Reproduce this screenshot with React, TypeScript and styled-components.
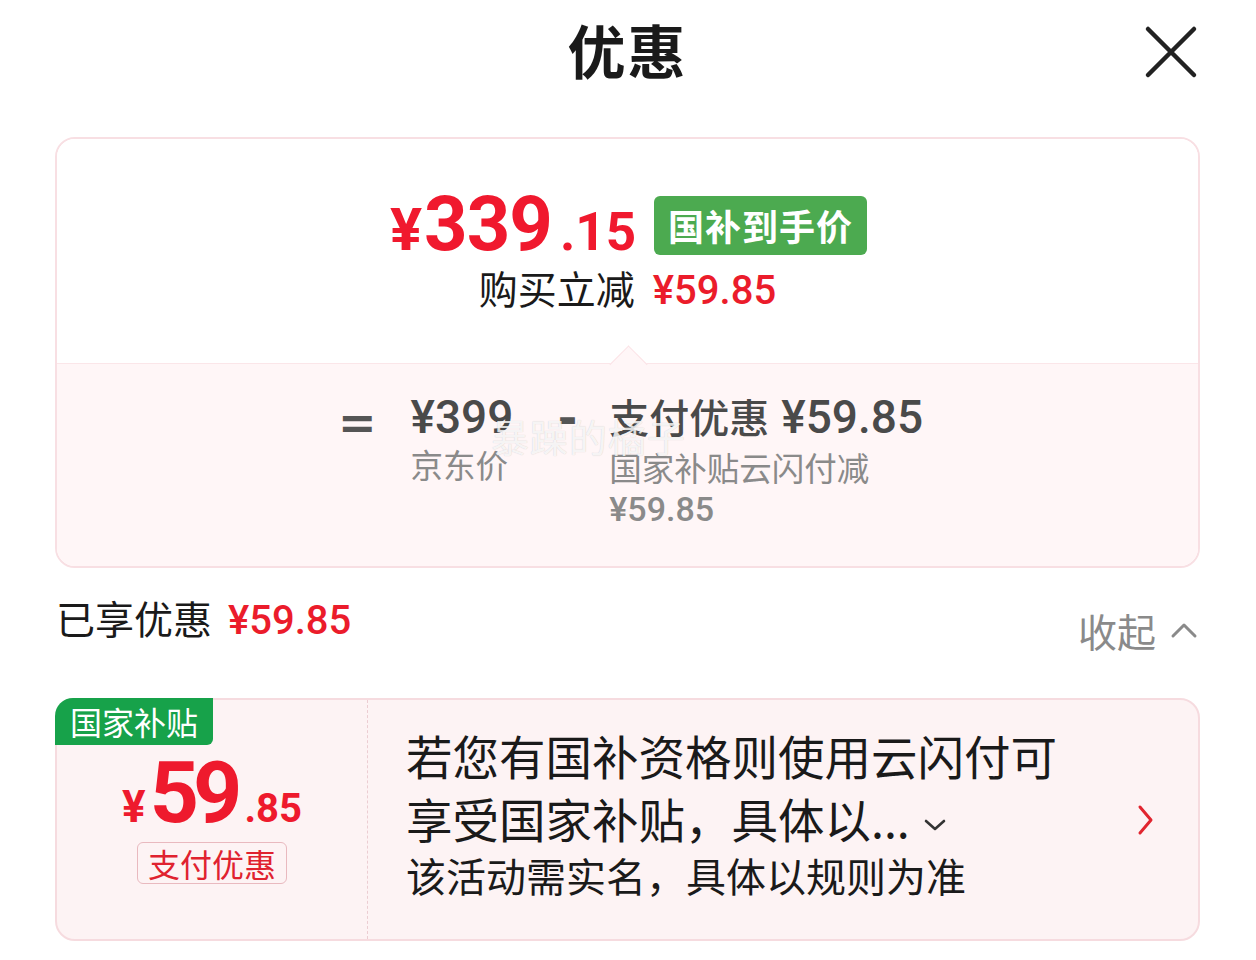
import React from "react";
import styled, { createGlobalStyle } from "styled-components";

const GlobalStyle = createGlobalStyle`
  html, body {
    margin: 0;
    padding: 0;
    background: #fff;
  }
  body {
    font-family: "Noto Sans CJK SC", "Noto Sans", sans-serif;
    color: #1a1a1a;
  }
`;

const NUM = `"Roboto", "Noto Sans CJK SC", sans-serif`;

const App: React.FC = () => {
  return (
    <Page>
      <GlobalStyle />
      <Header>
        <Title>优惠</Title>
        <Close aria-label="close">
          <svg width="54" height="54" viewBox="0 0 54 54">
            <path
              d="M4 4 L50 50 M50 4 L4 50"
              stroke="#222"
              strokeWidth="4.5"
              strokeLinecap="round"
            />
          </svg>
        </Close>
      </Header>

      <Summary>
        <SummaryTop>
          <PriceRow>
            <BigPrice>
              <Yen>¥</Yen>
              <Int>339</Int>
              <Dec>.15</Dec>
            </BigPrice>
            <GreenBadge>国补到手价</GreenBadge>
          </PriceRow>
          <SaveRow>
            购买立减<RedNum>¥59.85</RedNum>
          </SaveRow>
        </SummaryTop>
        <SummaryBottom>
          <Formula>
            <Op>=</Op>
            <Term>
              <TermMain $price>¥399</TermMain>
              <TermSub>京东价</TermSub>
            </Term>
            <Op $minus>-</Op>
            <Term>
              <TermMain>
                支付优惠 <b>¥59.85</b>
              </TermMain>
              <TermSub>国家补贴云闪付减</TermSub>
              <TermSub $num>¥59.85</TermSub>
            </Term>
          </Formula>
          <Watermark>暴躁的橘子</Watermark>
        </SummaryBottom>
      </Summary>

      <EnjoyRow>
        <EnjoyLabel>
          已享优惠<RedNum>¥59.85</RedNum>
        </EnjoyLabel>
        <Collapse>
          收起
          <svg width="28" height="20" viewBox="0 0 28 20">
            <path
              d="M3 16 L14 5 L25 16"
              fill="none"
              stroke="#8a8a8a"
              strokeWidth="3"
              strokeLinecap="round"
              strokeLinejoin="round"
            />
          </svg>
        </Collapse>
      </EnjoyRow>

      <Coupon>
        <CouponLeft>
          <CornerTag>国家补贴</CornerTag>
          <CouponPrice>
            <SmallYen>¥</SmallYen>
            <CouponInt>59</CouponInt>
            <CouponDec>.85</CouponDec>
          </CouponPrice>
          <OutlineTag>支付优惠</OutlineTag>
        </CouponLeft>
        <CouponRight>
          <CouponText>
            <Desc>
              若您有国补资格则使用云闪付可
              <br />
              享受国家补贴，具体以...
              <DownIcon width="30" height="20" viewBox="0 0 30 20">
                <path
                  d="M6 6 L15 14 L24 6"
                  fill="none"
                  stroke="#333"
                  strokeWidth="2.6"
                  strokeLinecap="round"
                  strokeLinejoin="round"
                />
              </DownIcon>
            </Desc>
            <Note>该活动需实名，具体以规则为准</Note>
          </CouponText>
          <svg width="20" height="32" viewBox="0 0 20 32">
            <path
              d="M4 3 L15 16 L4 29"
              fill="none"
              stroke="#e1252f"
              strokeWidth="3"
              strokeLinecap="round"
              strokeLinejoin="round"
            />
          </svg>
        </CouponRight>
      </Coupon>
    </Page>
  );
};

export default App;

const Page = styled.div`
  width: 1256px;
  height: 960px;
  overflow: hidden;
  padding: 0 56px 0 55px;
  box-sizing: border-box;
`;

const Header = styled.div`
  position: relative;
  height: 137px;
  display: flex;
  justify-content: center;
`;

const Title = styled.h1`
  margin: 11px 0 0;
  font-size: 58px;
  font-weight: 700;
  line-height: 76px;
  color: #1a1a1a;
  letter-spacing: 2px;
`;

const Close = styled.div`
  position: absolute;
  right: 2px;
  top: 25px;
  width: 54px;
  height: 54px;
`;

const Summary = styled.div`
  border: 2px solid #f8dfe3;
  border-radius: 20px;
  overflow: hidden;
  height: 431px;
  box-sizing: border-box;
  display: flex;
  flex-direction: column;
`;

const SummaryTop = styled.div`
  height: 224px;
  background: #fff;
  display: flex;
  flex-direction: column;
  align-items: center;
  padding-top: 49px;
  box-sizing: border-box;
`;

const PriceRow = styled.div`
  display: flex;
  align-items: center;
  gap: 18px;
  height: 72px;
`;

const BigPrice = styled.div`
  display: flex;
  align-items: baseline;
  color: #f0192e;
  font-family: ${NUM};
  font-weight: 700;
  line-height: 1;
  margin-left: 2px;
`;

const Yen = styled.span`
  font-size: 60px;
  margin-right: 2px;
`;

const Int = styled.span`
  font-size: 76px;
  letter-spacing: -1px;
`;

const Dec = styled.span`
  font-size: 53px;
  margin-left: 8px;
`;

const GreenBadge = styled.div`
  background: #4caa50;
  color: #fff;
  font-size: 36px;
  font-weight: 700;
  height: 59px;
  line-height: 59px;
  padding: 0 14px;
  border-radius: 6px;
  letter-spacing: 1px;
  margin-top: 2px;
`;

const SaveRow = styled.div`
  margin-top: 2px;
  font-size: 39px;
  line-height: 50px;
  color: #1a1a1a;
`;

const RedNum = styled.span`
  color: #eb1c2b;
  font-family: ${NUM};
  font-weight: 500;
  font-size: 40px;
  margin-left: 18px;
`;

const SummaryBottom = styled.div`
  position: relative;
  flex: 1;
  background: #fff6f7;
  border-top: 1px solid #fbe6e9;
  display: flex;
  justify-content: center;

  &::before {
    content: "";
    position: absolute;
    top: -13px;
    left: 50%;
    width: 26px;
    height: 26px;
    margin-left: -13px;
    background: #fff6f7;
    border-top: 1px solid #fbe2e6;
    border-left: 1px solid #fbe2e6;
    transform: rotate(45deg);
  }
`;

const Formula = styled.div`
  display: flex;
  align-items: flex-start;
  padding-top: 27px;
  margin-left: 6px;
`;

const Op = styled.div<{ $minus?: boolean }>`
  font-family: "DejaVu Sans", sans-serif;
  font-size: ${(p) => (p.$minus ? "48px" : "46px")};
  font-weight: 700;
  color: #555;
  line-height: 52px;
  margin: ${(p) => (p.$minus ? "0 32px 0 44px" : "6px 34px 0 0")};
`;

const Term = styled.div`
  display: flex;
  flex-direction: column;
`;

const TermMain = styled.div<{ $price?: boolean }>`
  font-size: ${(p) => (p.$price ? "46px" : "40px")};
  line-height: 52px;
  color: #4a4a4a;
  font-family: ${NUM};
  font-weight: 500;
  white-space: nowrap;

  b {
    font-weight: 500;
    font-size: 46px;
    margin-left: 2px;
  }
`;

const TermSub = styled.div<{ $num?: boolean }>`
  font-size: ${(p) => (p.$num ? "34px" : "32.5px")};
  line-height: 42px;
  color: #8a8a8a;
  font-family: ${(p) => (p.$num ? NUM : "inherit")};
  font-weight: ${(p) => (p.$num ? 500 : 400)};
`;

const Watermark = styled.div`
  position: absolute;
  left: 434px;
  top: 44px;
  font-size: 38px;
  color: rgba(255, 255, 255, 0.82);
  text-shadow: 0 0 1px rgba(0, 0, 0, 0.2);
  letter-spacing: 1px;
  pointer-events: none;
`;

const EnjoyRow = styled.div`
  height: 130px;
  display: flex;
  justify-content: space-between;
  align-items: flex-start;
`;

const EnjoyLabel = styled.div`
  margin-top: 24px;
  font-size: 39px;
  line-height: 50px;
  color: #1a1a1a;
  margin-left: 1px;

  span {
    margin-left: 16px;
  }
`;

const Collapse = styled.div`
  margin-top: 37px;
  display: flex;
  align-items: center;
  gap: 14px;
  font-size: 39px;
  line-height: 50px;
  color: #8a8a8a;
  margin-right: 2px;
`;

const Coupon = styled.div`
  height: 243px;
  display: flex;
  background: #fdf3f4;
  border: 2px solid #f6dbdf;
  border-radius: 20px;
  box-sizing: border-box;
`;

const CouponLeft = styled.div`
  position: relative;
  width: 311px;
  flex-shrink: 0;
  border-right: 1.5px dashed #eccdd2;
  display: flex;
  flex-direction: column;
  align-items: center;
  padding-top: 50px;
  box-sizing: border-box;
`;

const CornerTag = styled.div`
  position: absolute;
  left: -2px;
  top: -2px;
  height: 47px;
  line-height: 47px;
  padding: 0 15px;
  background: #17a24a;
  color: #fff;
  font-size: 32px;
  border-radius: 18px 0 6px 0;
`;

const CouponPrice = styled.div`
  display: flex;
  align-items: baseline;
  color: #ee1a2d;
  font-family: ${NUM};
  font-weight: 700;
  line-height: 1;
  height: 86px;
  margin-left: 0;
`;

const SmallYen = styled.span`
  font-size: 44px;
  margin-right: 4px;
`;

const CouponInt = styled.span`
  font-size: 86px;
  letter-spacing: -6px;
`;

const CouponDec = styled.span`
  font-size: 40px;
  margin-left: 8px;
`;

const OutlineTag = styled.div`
  margin-top: 6px;
  border: 1.5px solid #e9b9bf;
  border-radius: 6px;
  color: #e0222f;
  font-size: 32px;
  line-height: 40px;
  padding: 0 10px;
`;

const CouponRight = styled.div`
  flex: 1;
  display: flex;
  align-items: center;
  justify-content: space-between;
  padding: 0 42px 0 38px;
`;

const CouponText = styled.div`
  display: flex;
  flex-direction: column;
  margin-top: -16px;
`;

const Desc = styled.div`
  font-size: 46.5px;
  line-height: 63px;
  color: #1a1a1a;
`;

const DownIcon = styled.svg`
  margin-left: 10px;
  vertical-align: middle;
`;

const Note = styled.div`
  font-size: 40px;
  line-height: 52px;
  color: #1a1a1a;
`;
